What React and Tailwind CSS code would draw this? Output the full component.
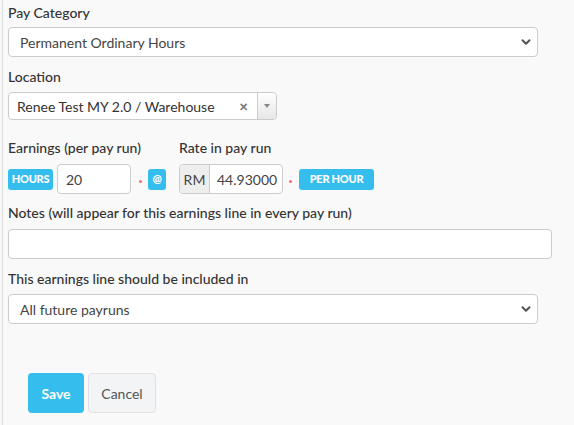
import { ChevronDown } from "lucide-react";

function Label({ children, className = "" }) {
  return (
    <div className={`text-[14px] leading-[20px] font-medium text-[#333] ${className}`}>{children}</div>
  );
}

function Select({ value, className = "" }) {
  return (
    <div
      className={`flex items-center justify-between h-[30px] rounded-[4px] border border-[#ccc] bg-white pl-[11px] pr-[4px] text-[14px] text-[#444] ${className}`}
    >
      <span>{value}</span>
      <ChevronDown size={14} strokeWidth={3.5} className="text-[#555]" />
    </div>
  );
}

function Badge({ children, className = "" }) {
  return (
    <span
      className={`flex items-center justify-center h-[21px] rounded-[3px] bg-[#35bdee] text-white text-[11px] font-black tracking-tight ${className}`}
    >
      {children}
    </span>
  );
}

function Required({ className = "" }) {
  return <span className={`block w-[3px] h-[3px] rounded-full bg-[#f26c6c] mt-[4px] ${className}`} />;
}

export default function App() {
  return (
    <div className="min-h-screen bg-[#f9f9f9] font-['Lato',sans-serif]">
      <div className="ml-[2px] min-h-[425px] border-l border-[#dcdcdc] pl-[5px] pt-[3px]">
        <Label>Pay Category</Label>
        <Select value="Permanent Ordinary Hours" className="mt-[4px] w-[530px]" />

        <Label className="mt-[10px]">Location</Label>
        <div className="mt-[5px] flex h-[28px] w-[269px] rounded-[4px] border border-[#ccc] bg-white text-[14px] text-[#333]">
          <div className="flex flex-1 items-center justify-between pl-[8px] pr-[9px]">
            <span>Renee Test MY 2.0 / Warehouse</span>
            <span className="text-[15px] font-black leading-none text-[#777]">×</span>
          </div>
          <div className="flex w-[19px] items-center justify-center rounded-r-[4px] border-l border-[#ccc] bg-gradient-to-b from-white to-[#e6e6e6]">
            <span className="h-0 w-0 border-x-[3px] border-t-[4px] border-x-transparent border-t-[#888]" />
          </div>
        </div>

        <div className="mt-[18px] flex">
          <div className="w-[171px]">
            <Label>Earnings (per pay run)</Label>
            <div className="mt-[6px] flex items-center">
              <Badge className="w-[45px]">HOURS</Badge>
              <div className="ml-[4px] flex h-[30px] w-[74px] items-center rounded-[4px] border border-[#ccc] bg-white pl-[8px] text-[14px] text-[#444]">
                20
              </div>
              <Required className="ml-[8px]" />
              <Badge className="ml-[6px] w-[18px]">@</Badge>
            </div>
          </div>
          <div>
            <Label>Rate in pay run</Label>
            <div className="mt-[6px] flex items-center">
              <div className="flex h-[30px] rounded-[4px] border border-[#ccc] bg-white text-[14px]">
                <span className="flex w-[30px] items-center justify-center rounded-l-[4px] border-r border-[#ccc] bg-[#eee] text-[#444]">
                  RM
                </span>
                <span className="flex w-[72px] items-center pl-[7px] text-[#444]">44.93000</span>
              </div>
              <Required className="ml-[6px]" />
              <Badge className="ml-[7px] w-[75px]">PER HOUR</Badge>
            </div>
          </div>
        </div>

        <Label className="mt-[9px]">Notes (will appear for this earnings line in every pay run)</Label>
        <div className="mt-[6px] h-[30px] w-[544px] rounded-[4px] border border-[#ccc] bg-white" />

        <Label className="mt-[10px]">This earnings line should be included in</Label>
        <Select value="All future payruns" className="mt-[5px] w-[530px]" />

        <div className="ml-[20px] mt-[49px] flex gap-[4px]">
          <button className="h-[40px] w-[56px] rounded-[4px] bg-[#35bdee] text-[14px] font-bold text-white">
            Save
          </button>
          <button className="h-[40px] w-[68px] rounded-[4px] border border-[#e2e2e2] bg-[#f3f4f6] text-[14px] text-[#555]">
            Cancel
          </button>
        </div>
      </div>
    </div>
  );
}
